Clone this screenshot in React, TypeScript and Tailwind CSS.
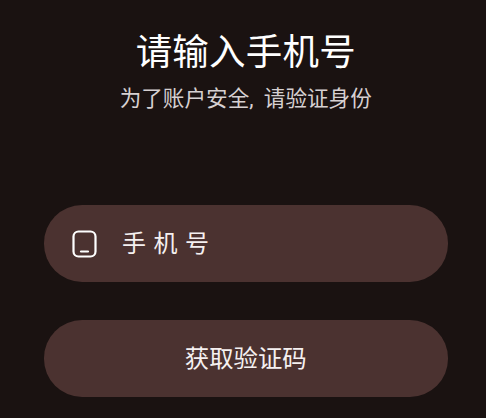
import { type FC } from 'react';

const PhoneIcon: FC = () => (
  <svg width="25" height="28" viewBox="0 0 25 28" fill="none" stroke="#ffffff" strokeWidth="2.2" strokeLinecap="round">
    <rect x="1.5" y="1.5" width="22" height="25" rx="5" />
    <path d="M9 21.5h7" />
  </svg>
);

const App: FC = () => {
  return (
    <div className="h-[418px] w-[486px] overflow-hidden bg-[#1a1211] pr-[38.5px] pl-[44px] font-['Roboto','Noto_Sans_CJK_SC',sans-serif]">
      <div className="flex flex-col items-center pt-[28px]">
        <h1 className="text-[36.5px] leading-[50px] font-normal tracking-[0.2px] text-white">请输入手机号</h1>
        <p className="mt-[5px] text-[21.6px] leading-[32px] [word-spacing:5px] text-[#d6d0d1]">为了账户安全, 请验证身份</p>
      </div>
      <div className="mt-[90px] flex flex-col gap-[38px]">
        <div className="flex h-[77px] items-center rounded-[38px] bg-[#4b3230] pl-[28px]">
          <PhoneIcon />
          <span className="ml-[25px] text-[24px] tracking-[7.5px] text-[#f5f0f0]">手机号</span>
        </div>
        <button className="h-[77px] rounded-[38px] bg-[#4b3230] pt-px text-[24.4px] text-[#f5f0f0]">获取验证码</button>
      </div>
    </div>
  );
};

export default App;
